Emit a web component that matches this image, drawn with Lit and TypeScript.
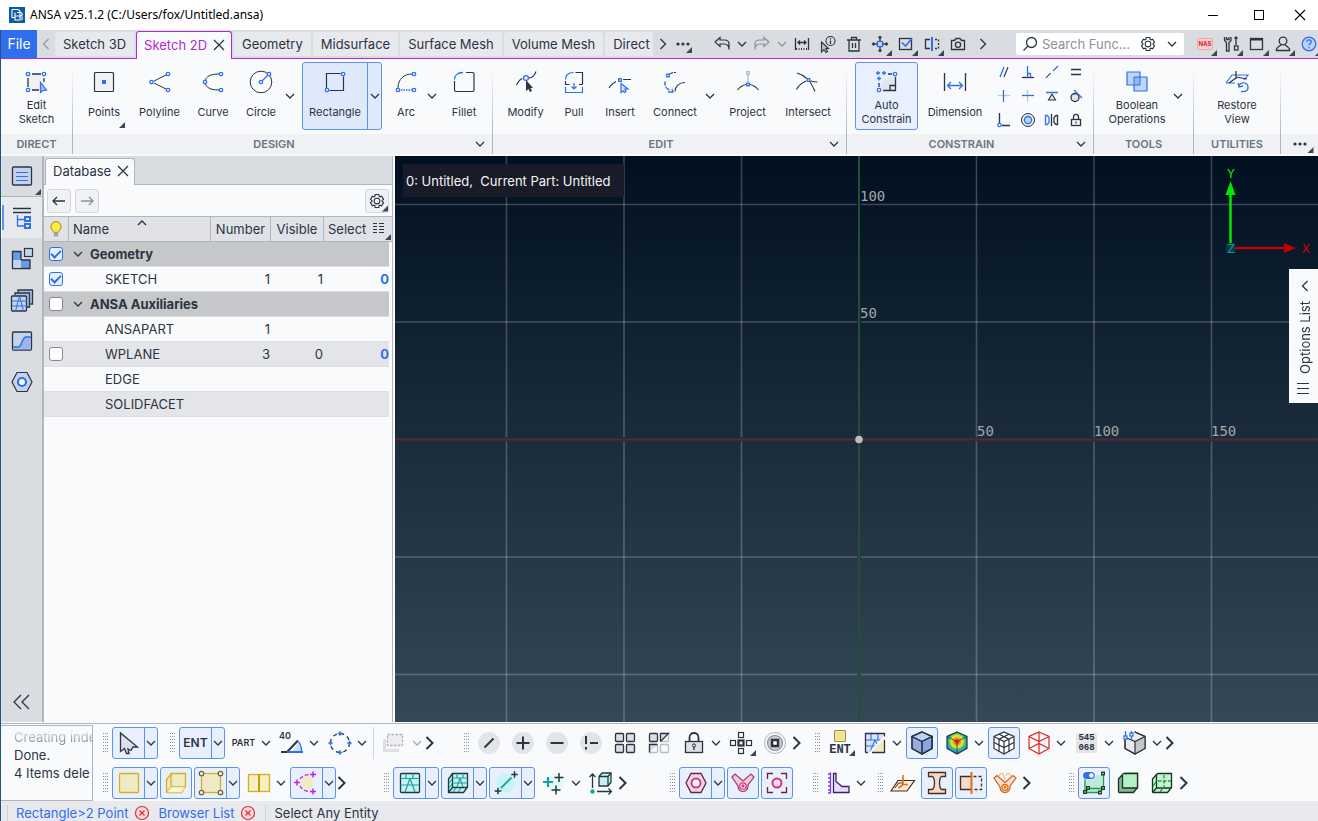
import { LitElement, html, css, svg, nothing } from 'lit';
import { customElement, state } from 'lit/decorators.js';
import { classMap } from 'lit/directives/class-map.js';

const D = '#2b3442';
const B = '#2f6fed';
const G = '#8a9099';

const node = (x: number, y: number) =>
  svg`<circle cx=${x} cy=${y} r="1.7" fill="#fff" stroke=${B} stroke-width="1.3"/>`;
const knot = (x: number, y: number, c = B) =>
  svg`<rect x=${x - 1.3} y=${y - 1.3} width="2.6" height="2.6" fill="#fff" stroke=${c} stroke-width="1.3"/>`;
const plus = (x: number, y: number, r: number, c: string, w = 1.5) =>
  svg`<path d=${`M${x - r} ${y}h${2 * r}M${x} ${y - r}v${2 * r}`} stroke=${c} stroke-width=${w}/>`;

const polar = (deg: number, r: number) => {
  const a = (deg * Math.PI) / 180;
  return `${(12 + r * Math.cos(a)).toFixed(2)} ${(12 + r * Math.sin(a)).toFixed(2)}`;
};
const GEAR = 'M' + [0, 1, 2, 3, 4, 5]
  .flatMap(k => [polar(k * 60 - 106, 9), polar(k * 60 - 74, 9), polar(k * 60 - 66, 6.8), polar(k * 60 - 54, 6.8)])
  .join('L') + 'z';
const HEX3D = 'M12 1L22 5.5V17.5L12 23 2 17.5V5.5z';

/* Every glyph is drawn on a 24 x 24 grid. */
const icons: Record<string, unknown> = {
  down: svg`<path d="M8 10l4 4 4-4"/>`,
  up: svg`<path d="M8 14l4-4 4 4"/>`,
  left: svg`<path d="M14.500 7l-5 5 5 5"/>`,
  right: svg`<path d="M9.500 7l5 5-5 5"/>`,
  more: svg`<path d="M8.500 6l6 6-6 6" stroke-width="2"/>`,
  dleft: svg`<path d="M11 5l-7 7 7 7M19 5l-7 7 7 7"/>`,
  close: svg`<path d="M7 7l10 10M17 7L7 17"/>`,
  dots: svg`<g fill=${D} stroke="none"><circle cx="7" cy="12" r="1.600"/><circle cx="12" cy="12" r="1.600"/><circle cx="17" cy="12" r="1.600"/></g>`,
  wmin: svg`<path d="M7 12.500h10" stroke="#000" stroke-width="1"/>`,
  wmax: svg`<rect x="7.500" y="7.500" width="9" height="9" stroke="#000" stroke-width="1"/>`,
  wclose: svg`<path d="M7 7l10 10M17 7L7 17" stroke="#000" stroke-width="1.100"/>`,
  undo: svg`<path d="M10 5.500L5 10l5 4.500V12h4c3 0 5 2 5 5.500V12c0-2.500-2-4-4.500-4H10z" stroke-width="1.200"/>`,
  redo: svg`<path d="M14 5.500L19 10l-5 4.500V12h-4c-3 0-5 2-5 5.500V12c0-2.500 2-4 4.500-4H14z" stroke=${G} stroke-width="1.200"/>`,
  measure: svg`<path d="M5.500 6v12M18.500 6v12M8 10.500h8M10 8.500l-2 2 2 2M14 8.500l2 2-2 2"/><path d="M6 17h12" stroke-width="2" stroke-dasharray="1 1.500"/>`,
  cursorinfo: svg`<circle cx="14.500" cy="9" r="4.500" stroke-width="1.100"/><path d="M14.500 8.500V12M14.500 6.300v1.200"/><path d="M5.500 10v10l2.500-2.500 2 3 1.500-1-1.500-3h2.500z" fill="#b9bec7" stroke-width="1.100"/>`,
  trash: svg`<path d="M5 8h14M7 8v11h10V8M9.500 8V5.500h5V8M10.500 11v5M13.500 11v5"/>`,
  move: svg`<rect x="9.500" y="9.500" width="5" height="5" stroke=${B}/><path d="M12 9V4.500M12 15v4.500M9 12H4.500M15 12h4.500M10.500 6L12 4.500 13.500 6M10.500 18l1.500 1.500 1.500-1.500M6 10.500L4.500 12 6 13.500M18 10.500l1.500 1.500-1.500 1.500"/>`,
  check: svg`<rect x="5.500" y="6.500" width="12" height="11"/><path d="M8 10.500l3.500 3.500L18 6.500" stroke=${B} stroke-width="1.600"/>`,
  mirror: svg`<path d="M10 7.500H5.500v9H10"/><path d="M15 7.500h3.500v9H15" stroke-dasharray="2 1.500"/><path d="M12 5v14" stroke=${B} stroke-width="2"/>`,
  camera: svg`<path d="M5.500 8.500h3l1.500-2h4l1.500 2h3v9h-13z"/><circle cx="12" cy="12.800" r="2.600"/>`,
  search: svg`<circle cx="13.500" cy="10.500" r="5"/><path d="M10 14l-4.500 4.500"/>`,
  gear: svg`<path d=${GEAR} stroke-width="1.500"/><circle cx="12" cy="12" r="3.800" stroke-width="1.400"/>`,
  tools: svg`<path d="M5.500 5v3.500l2 2V19H10v-8.500l2-2V5M7.500 5v2.500H10V5"/><path d="M17 5v8M15.500 6.500L17 5l1.500 1.500"/><rect x="15.500" y="14" width="3.500" height="4"/>`,
  win: svg`<rect x="5.500" y="6.500" width="12" height="11"/><path d="M5.500 7.500h12" stroke-width="2"/>`,
  user: svg`<circle cx="12" cy="9" r="3.800"/><path d="M5 18.500c1-3.500 3-4.500 5-5.500M19 18.500c-1-3.500-3-4.500-5-5.500M5 18.500h14"/>`,
  help: svg`<circle cx="12" cy="12" r="6.800" fill="#bcd2fa" stroke=${B}/><path d="M9.800 10c0-3 4.500-2.600 4.500 0 0 1.600-2.300 1.600-2.300 3.200M12 14.800v1.400" stroke=${B}/>`,
  list: svg`<rect x="2.500" y="3" width="19" height="18" rx="1" fill="#c3d3ea"/><path d="M6 8.500h12M6 12.500h12M6 16.500h12" stroke=${B} stroke-width="1.200"/>`,
  tree: svg`<path d="M3 2.500h18M3 6.500h18"/><path d="M7.500 9v11H14M7.500 13.500H14" stroke=${B}/><rect x="15" y="11" width="5" height="4" stroke=${B} stroke-width="2"/><rect x="15" y="18" width="5" height="4" stroke=${B} stroke-width="2"/>`,
  parts: svg`<rect x="14.500" y="1.500" width="8" height="8" fill="#c3d3ea" stroke-width="1.200"/><path d="M2.500 4.500H11V13h9v8.500H2.500z" fill="#6b98e8"/><path d="M3.200 13H11v8H3.200z" fill="#c3d3ea" stroke="none"/>`,
  stack: svg`<path d="M8 4.500V2h14.500V16h-2M5 7.500V5h14.500v14H17" fill="#a8bfea"/><rect x="1.500" y="8" width="15" height="15" rx="1" fill="#c3d3ea"/><path d="M2 13h15M2 18h15M9.500 8l-4 15M9.500 8l4 15" stroke=${B} stroke-width="1"/>`,
  curvebox: svg`<rect x="2.500" y="3" width="19" height="18" rx="1" fill="#c3d3ea"/><path d="M3 18h5c4 0 4-10 8-10h5v12.500H3z" fill="#9cb5ea" stroke="none"/><path d="M3 18h5c4 0 4-10 8-10h5" stroke=${B} stroke-width="1.600"/>`,
  hexa: svg`<path d="M7 2.500h10l5 9.500-5 9.500H7L2 12z" fill="#c3d3ea" stroke-width="1.200"/><circle cx="12" cy="12" r="4" fill="#fff" stroke=${B} stroke-width="2.200"/>`,
  bulb: svg`<path d="M9.500 15.500c-.500-2-3-3-3-6a5.500 5.500 0 0 1 11 0c0 3-2.500 4-3 6z" fill="#f8ec4a" stroke="#b59b12" stroke-width="1.200"/><path d="M10.500 17h3v2.500h-3z" stroke="#777" stroke-width="1"/>`,
  back: svg`<path d="M6 12h12M10 8l-4 4 4 4"/>`,
  fwd: svg`<path d="M6 12h12M14 8l4 4-4 4" stroke=${G}/>`,
  cols: svg`<path d="M7 6.500h4M7 9.500h4M7 12.500h4M7 15.500h4M13 6.500h5M13 9.500h5M13 12.500h5M13 15.500h5" stroke-width="1.100"/>`,
  burger: svg`<path d="M4 6.500h12M4 11.500h12M4 16.500h12" stroke-width="1.100"/>`,
  stop: svg`<circle cx="12" cy="12" r="6.500" fill="#fbdcdc" stroke="#dc2f3a" stroke-width="1.200"/><path d="M9.500 9.500l5 5M14.500 9.500l-5 5" stroke="#dc2f3a" stroke-width="1.300"/>`,

  edit: svg`<rect x="4" y="4" width="16" height="16" fill="#f0f1f4" stroke="none"/><path d="M8 4h9M4 8v9M8 20h7M20 8v4"/>${node(4, 4)}${node(20, 4)}${node(4, 20)}<path d="M16.500 12.500v10l2.500-2 3.500-.500z" fill="#9bbcf5" stroke=${B} stroke-width="1.200"/>`,
  points: svg`<rect x="2.500" y="2.500" width="19" height="19" rx="1" fill="#f0f1f4" stroke-width="1.200"/><rect x="10" y="10" width="4" height="4" fill=${B} stroke="none"/>`,
  polyline: svg`<path d="M6 11l12-6M6 13l12 6" stroke-width="1"/>${node(3.5, 12)}${node(20, 4)}${node(20, 20)}`,
  curve: svg`<path d="M18 4C9 4 5 7 4.500 10M18 20c-9 0-13-3-13.500-6" stroke-width="1"/>${node(4, 12)}${node(20, 4)}${node(20, 20)}`,
  circle: svg`<circle cx="12" cy="12" r="10.800" stroke-width="1"/><path d="M13.500 10.500l5-5" stroke=${B}/>${node(20, 4)}${node(12, 12)}`,
  rectangle: svg`<path d="M17.500 3.500h-14V18M6.500 20.500h14V6.500" stroke-width="1.200"/>${node(20, 4)}${node(4, 20)}`,
  arc: svg`<path d="M18 4C10 4 4 9 4 18" stroke-width="1"/><path d="M7 20h11" stroke=${B} stroke-dasharray="1.500 1"/>${node(20, 4)}${node(4, 20)}${node(20, 20)}`,
  fillet: svg`<path d="M2.500 11v9c0 1 .500 1.500 1.500 1.500h16.500c1 0 1.500-.500 1.500-1.500V4c0-1-.500-1.500-1.500-1.500H14" stroke-width="1.200"/><path d="M2.500 9.500C2.500 6 5 2.500 11 2.500" stroke=${B}/>`,
  modify: svg`<path d="M2.500 15c2-4 4-6 6-6.500M15 8c3 0 6-3 7-6.500" stroke-width="1.100"/><circle cx="12" cy="8" r="2.400" stroke=${B}/><path d="M12 10v11l2.500-2 1.500 3 2-1-1.500-3H19z" fill=${D} stroke="none"/>`,
  pull: svg`<path d="M3.500 11v3.500h4M20.500 14.500v-12h-7M17 14.500h3.500" stroke-width="1.200"/><path d="M3.500 9.500c0-4 2.500-7 8-7M3.500 17v5.500h17V17M12 13v6M9.500 16.500L12 19l2.500-2.500" stroke=${B} stroke-width="1.200"/>`,
  insert: svg`<path d="M1 18c2-3 4-5 7-6.500M15 9.500h8" stroke-width="1.100"/>${knot(12, 10)}<path d="M13 13.500v9l2-1.500 1.500 1.500 1.500-1-1-2.500h3z" fill="#cfe0fb" stroke=${B} stroke-width="1.200"/>`,
  connect: svg`<path d="M11 2.500h2M4.500 6.500C6 4 8 3 10 2.500M2 11.500v4M12 21.500c0-5 4-9 10-9" stroke-width="1.100"/>${knot(5, 5.5)}<path d="M2.500 16.500c1 2 2 3 4 3.500M5 22h5l-1-3" stroke=${B}/>`,
  project: svg`<path d="M12 5v8" stroke="#b5bac3"/>${knot(12, 3, '#b5bac3')}<path d="M1.500 20C4 17 7 15 10 14.500M14 14.500c3 .500 6 2.500 8.500 5.500" stroke-width="1.100"/>${knot(12, 14.5)}`,
  intersect: svg`<path d="M1 3c4 1 7 3 9.500 5.500M14 11c3 .500 5 .800 7.500 1M14 12c2 3 3.500 6 5 9.500M.500 19.500c2-4 6-7 9.500-8.500" stroke-width="1.100"/>${knot(12.5, 10)}`,
  auto: svg`<path d="M10 10L20 4v16H4z" fill="#d8dde6" opacity=".5" stroke="none"/>${plus(3, 3, 2, B, 1.3)}${plus(9, 3, 2, B, 1.3)}${plus(4, 8.5, 2, B, 1.3)}<path d="M13 4h4M4 13v4M8 20.500h12.500V7M15 20v-4.500h5"/>${node(20, 4)}${node(4, 20)}`,
  dimension: svg`<path d="M1.500 3v18M22.500 3v18"/><path d="M4.500 15.500h15M8 12l-3.500 3.500L8 19M16 12l3.500 3.500L16 19" stroke=${B}/>`,
  boolean: svg`<path d="M2 2h13v5h7v14H9v-6H2z" fill="#bdd5fa" stroke=${B} stroke-width="1.200"/><path d="M9 7h6v8H9z" fill="#93b8f6" stroke=${B} stroke-width="1"/>`,
  restore: svg`<path d="M1 13L7 5h16l-4 5M1 13h9" stroke=${B} stroke-width="1.200"/><path d="M11 1v8M11 7l11 2M11 8l-7 5" stroke-width="1.200"/><path d="M14 16.500c0-5 9-5 9 1 0 4-4 4.500-7 4M13 13l1 4 4-1" stroke=${B}/>`,

  parallel: svg`<path d="M8 17l4-10" stroke=${B}/><path d="M12 17l4-10" stroke-width="1.100"/>`,
  perp: svg`<path d="M6 17.500h12"/><path d="M11.500 6v11.500M11.500 13.500h3v4" stroke=${B}/>`,
  colinear: svg`<path d="M6 18l4.500-5" stroke-width="1.100"/><path d="M13 11l5-5" stroke=${B}/>`,
  equal: svg`<path d="M7 9.500h10M7 14.500h10"/>`,
  vert: svg`<path d="M6 11.500h12" stroke="#c4c8cf"/><path d="M11.500 6v12" stroke=${B}/>`,
  horiz: svg`<path d="M11.500 6v12" stroke="#c4c8cf"/><path d="M6 11.500h12" stroke=${B}/>`,
  mid: svg`<path d="M6 8.500h12" stroke=${B} stroke-width="1.500"/><path d="M12 10l-3.500 6h7z" fill="#e3e5e9" stroke-width="1.100"/>`,
  tangent: svg`<circle cx="11" cy="13.500" r="4" fill="#e3e5e9"/><path d="M10 6l8 8" stroke=${B}/>`,
  coinc: svg`<path d="M7.500 5v10M10 17.500h8"/>${node(7.5, 17)}`,
  conc: svg`<circle cx="12" cy="12" r="6.500" stroke=${D} fill="#e3e5e9" stroke-width="1"/><circle cx="12" cy="12" r="3.500" fill="#bdd5fa" stroke=${B}/>`,
  sym: svg`<path d="M11.500 6v12"/><path d="M5.500 7.500h1.500l2 2v5l-2 2H5.500z" stroke=${B}/><path d="M17.500 7.500h-1.500l-2 2v5l2 2h1.500z"/>`,
  lock: svg`<rect x="7.500" y="11.500" width="9" height="6"/><path d="M9.500 11V9c0-3.500 5-3.500 5 0v2M12 13.500v2"/>`,

  pick: svg`<path d="M3.500 2v18.500l4-3 2 5h2.500l-1-4.500 3 1.500 2-3.500h4.500z" fill="#dcdfe5" stroke-width="1.300"/>`,
  angle: svg`<path d="M12 21l6-9c3 2 4 5 4 9z" fill="#cfe0fb" stroke="none"/><path d="M18.500 11c2 2 3 5 3 9" stroke=${B}/><path d="M1 21h6L18 9.500" stroke-width="2"/><path d="M7 21h16" stroke=${B} stroke-width="2"/>`,
  area: svg`<circle cx="12" cy="12" r="9.500" stroke-dasharray="4 3.460"/>${plus(12, 2.5, 2.2, B)}${plus(12, 21.5, 2.2, B)}${plus(2.5, 12, 2.2, B)}${plus(21.5, 12, 2.2, B)}`,
  isolate: svg`<path d="M0 8h3v10h13v3H0z" fill="#b5b8bd" stroke="none"/><rect x="4.500" y="3.500" width="15" height="11" fill="#dcdcde" stroke="#444" stroke-dasharray="2.500 1.500"/>`,
  slash: svg`<circle cx="12" cy="12" r="11" fill="#e3e4e8" stroke="none"/><path d="M7.500 16.500l9-9" stroke-width="2"/>`,
  add: svg`<circle cx="12" cy="12" r="11" fill="#e3e4e8" stroke="none"/>${plus(12, 12, 6.5, D, 2)}`,
  minus: svg`<circle cx="12" cy="12" r="11" fill="#e3e4e8" stroke="none"/><path d="M5.500 12h13" stroke-width="2"/>`,
  excl: svg`<circle cx="12" cy="12" r="11" fill="#e3e4e8" stroke="none"/><path d="M7 5v8M7 16v2.500M11 12h8" stroke-width="2"/>`,
  four: svg`<g fill="#dcdee2"><rect x="2.500" y="2.500" width="8" height="8" rx="1"/><rect x="13.500" y="2.500" width="8" height="8" rx="1"/><rect x="2.500" y="13.500" width="8" height="8" rx="1"/><rect x="13.500" y="13.500" width="8" height="8" rx="1"/></g>`,
  fourinv: svg`<rect x="2.500" y="2.500" width="8" height="8" rx="1" fill="#dcdee2"/><g stroke="#b9bdc4"><rect x="13.500" y="2.500" width="8" height="8" rx="1"/><rect x="2.500" y="13.500" width="8" height="8" rx="1"/><rect x="13.500" y="13.500" width="8" height="8" rx="1"/></g><path d="M13.500 10.500v-8h8l-8 8M2.500 21.500v-8h8" fill="#dcdee2"/>`,
  biglock: svg`<path d="M7.500 10V6.500c0-6 9-6 9 0V10" stroke-width="1.800"/><rect x="3.500" y="10.500" width="17" height="11" fill="#dfe1e5"/><circle cx="12" cy="14.500" r="1.600" stroke-width="1"/><path d="M12 16v3"/>`,
  neigh: svg`<rect x="9.500" y="9.500" width="5" height="5" stroke-width="2.200"/><g stroke-width="1.200"><rect x="9.500" y="1.500" width="5" height="5"/><rect x="9.500" y="17.500" width="5" height="5"/><rect x="1.500" y="9.500" width="5" height="5"/><rect x="17.500" y="9.500" width="5" height="5"/></g>`,
  target: svg`<circle cx="12" cy="12" r="10.500" stroke="#b0b4bb" stroke-width="1"/><circle cx="12" cy="12" r="7.500" fill="#c9ccd1" stroke=${G} stroke-width="1.200"/><rect x="9" y="9" width="6" height="6" fill="#fff" stroke-width="2.500"/>`,
  meshes: svg`<rect x="2" y="2.500" width="20" height="19" fill="#d7e5fb" stroke="none"/><path d="M2 9h20M2 15h20M8 2.500v6.500M15 2.500v6.500M12 9L7 21M12 9l4 8" stroke=${B} stroke-width="1.100"/><path d="M22 5v16.500H7z" fill="#f1eac0" stroke="#fff" stroke-width="1.500"/><path d="M2.500 21.500v-19h19v3M2.500 21.500h2.500M21.500 9v12.500H9"/>`,
  shaded: svg`<path d=${HEX3D} fill="#9aabe0"/><path d="M12 1l10 4.500-10 5L2 5.500z" fill="#b8d4fb"/><path d="M12 10.500l10-5v12L12 23z" fill="#86a6e6"/><path d=${HEX3D} stroke-width="1.200"/><path d="M2 5.500l10 5 10-5M12 10.500V23" stroke-width="1"/>`,
  contour: svg`<defs><radialGradient id="heat" gradientUnits="userSpaceOnUse" cx="12" cy="10.500" r="12"><stop offset=".1" stop-color="#e23a1c"/><stop offset=".35" stop-color="#f2b92c"/><stop offset=".5" stop-color="#e8ea2c"/><stop offset=".66" stop-color="#35c45e"/><stop offset=".8" stop-color="#2aa8d8"/><stop offset="1" stop-color="#2350c9"/></radialGradient></defs><path d=${HEX3D} fill="url(#heat)" stroke-width="1.200"/><path d="M2 5.500l10 5 10-5M12 10.500V23" stroke-width=".8"/>`,
  wirecube: svg`<path d=${HEX3D} fill="#fff" stroke-width="1.200"/><path d="M2 5.500l10 5 10-5M12 10.500V23M2 11.500l10 5 10-5M7 3.200l10 5v12M17 3.200l-10 5v12" stroke-width="1.200"/>`,
  redcube: svg`<g stroke="#e02424" stroke-width="1.200"><path d=${HEX3D}/><path d="M2 5.500l10 5 10-5M12 10.500V23M12 1v11.500M2 17.500l10-5 10 5"/></g>`,
  cubeset: svg`<path d=${HEX3D} fill="#e9eaec" stroke-width="1.200"/><path d="M12 10.500l10-5v12L12 23z" fill="#c5c7cb" stroke="none"/><path d=${HEX3D} stroke-width="1.200"/><path d="M-1-1h12.500v9.500H-1z" fill="#f9fafc" stroke="none"/><path d="M4 7l8 3.500 10-5M12 10.500V23" stroke-width="1.200"/><path d="M2.500 0v9.500M8.500 0v8" stroke=${B}/><g fill="#fff" stroke=${B}><rect x="1" y="5" width="3" height="3"/><rect x="7" y="2" width="3" height="3"/></g>`,

  yface: svg`<rect x="2.500" y="2.500" width="19" height="19" rx="1" fill="#efe9c6" stroke="#d4b11e"/>`,
  yvol: svg`<path d="M2.500 8.500l5-6h14v13l-4 6h-15z" fill="#efe9c6" stroke="#d4b11e"/><path d="M7 2.500V16h14M7 16l-4 5" stroke="#d4b11e"/><path d="M7 16h14.500l-4 5.500H2.500z" fill="#fff" opacity=".6" stroke="none"/>`,
  ynodes: svg`<rect x="2.500" y="2.500" width="19" height="19" fill="#efe9c6" stroke="#d4b11e"/><g fill="#fff" stroke="#6b6440"><circle cx="2.500" cy="2.500" r="2.200"/><circle cx="21.500" cy="2.500" r="2.200"/><circle cx="2.500" cy="21.500" r="2.200"/><circle cx="21.500" cy="21.500" r="2.200"/></g>`,
  ysplit: svg`<rect x="1.500" y="3.500" width="21" height="17" fill="#f5efc3" stroke="#d4b11e"/><path d="M12 3.500v17" stroke="#c39d10" stroke-width="2"/>`,
  ypts: svg`<path d="M7 6c5-3 10-2 11 5 0 4-1 7-5 8-4-1-7-5-8-8z" fill="#efe9c6" stroke="none"/><path d="M5 8c2-3 6-4.500 11-4.500M5 15c2 4 6 5.500 11 5.500" stroke="#c026d3" stroke-dasharray="4 2"/>${plus(18, 3.5, 3, '#c026d3')}${plus(2, 11.5, 3, '#c026d3')}${plus(18, 20.5, 3, '#c026d3')}`,
  tmesh: svg`<rect x="2.500" y="2.500" width="19" height="19" rx="1" fill="#c8f2f2" stroke="#1b3a3f"/><path d="M2.500 7.500h19M2.500 14h19M8 7.500v-5M15 7.500v-5M12 7.500L7 21M12 7.500L17 21" stroke="#17a2a2" stroke-width="1.200"/>`,
  tvol: svg`<path d="M2.500 8l4-5.500h15V16l-4 5.500h-15z" fill="#c8f2f2" stroke="#1b3a3f"/><path d="M6.500 2.500v14h15M6.500 16.500l-4 5" stroke="#1b3a3f"/><path d="M6.500 7h15M6.500 12h15M11 2.500v4.500M17 2.500v4.500M14 7l-3 9M14 7l3 9M3 12l3-4M3 17l3-4M7 21l3-4M12 21l3-4" stroke="#17a2a2" stroke-width="1.100"/>`,
  tline: svg`<circle cx="12" cy="12" r="9.500" fill="#c8f4f4" stroke="none"/><path d="M7 17L17.500 6.500" stroke="#17a2a2" stroke-width="1.800"/>${plus(20.5, 3.5, 3.3, '#1b3a3f')}${plus(4, 20, 3.3, '#1b3a3f')}`,
  tplus: svg`<circle cx="13" cy="12" r="9.500" fill="#e3f9f8" stroke="none"/>${plus(6, 11, 5, '#17a2a2', 2.2)}${plus(17, 6.5, 4.5, '#1b3a3f')}${plus(14, 19, 4.5, '#1b3a3f')}`,
  textr: svg`<path d="M3.500 17V3M.500 6l3-3 3 3M8 20.500h14M19.500 17.500l3 3-3 3" stroke="#1b3a3f"/><circle cx="3.500" cy="20.500" r="2.200" fill="#17a2a2" stroke="none"/><path d="M10 5.500l3-3.500h9v9l-3 4h-9z" fill="#c8f2f2" stroke="#1b3a3f"/><path d="M10 5.500h9v9M19 5.500l3-3.500" stroke="#1b3a3f"/>`,
  phex: svg`<path d="M7 2.500h10l5 9.500-5 9.500H7L2 12z" fill="#eadbe8" stroke="#6b2140"/><circle cx="12" cy="12" r="4.500" fill="#fff" stroke="#e0307e" stroke-width="2"/>`,
  pplug: svg`<path d="M1 6l3-3 8 7 8-7 3 3-6 8c1 8-10 9-10 1z" fill="#f3c9de" stroke="#a33a6c" stroke-width="1.200"/><circle cx="12" cy="15" r="3.200" fill="#fff" stroke="#e0307e"/><circle cx="12" cy="15" r="1" stroke="#e0307e"/>`,
  pfocus: svg`<path d="M2.500 8V2.500H8M16 2.500h5.500V8M21.500 16v5.500H16M8 21.500H2.500V16" stroke="#6b2140"/><circle cx="12" cy="12" r="4.500" fill="#fbe3ef" stroke="#e0307e" stroke-width="2"/>`,
  vprofile: svg`<path d="M6.500 2.500H9v8l6 5h7v6H6.500z" fill="#e9dcfb" stroke="#3d1f6b"/><path d="M3.500 1.500v21M1 3h2M1 7h2M1 11h2M1 15h2M1 19h2M1 22h2" stroke="#7c3aed"/>`,
  oplane: svg`<path d="M0 20L7 9.500h16.500L16 20z" fill="#fbeadd" stroke="#4a2c1a" stroke-width="1.200"/><path d="M4 17l3.500-5h5" stroke="#4a2c1a" stroke-width="1"/><path d="M12 4v9.500h5M12 13.500L7.500 17" stroke="#ea6c0a" stroke-width="1.600"/>`,
  obeam: svg`<path d="M3.500 1.500h17v4h-4c-2 1.500-2 3-2 6.500s0 5 2 6.500h4v4h-17v-4h4c2-1.500 2-3 2-6.500s0-5-2-6.500h-4z" fill="#f1dccf" stroke="#4a2c1a"/>`,
  osym: svg`<path d="M12 5.500H1.500v13H12" fill="#f1dccf" stroke="#4a2c1a"/><path d="M14.500 5.500h8v13h-8" stroke="#4a2c1a" stroke-dasharray="3 2"/><path d="M12.500 1v22" stroke="#ea6c0a" stroke-width="2"/>`,
  oplug: svg`<path d="M6 5c1-3 4-4 5 0l1 4M18 5c-1-3-4-4-5 0" stroke="#f3b98b" stroke-width="1.200"/><path d="M1 7l3-2.500 8 7 8-7L23 7l-6 8c1 8-10 9-10 1z" fill="#fbe0cc" stroke="#c2672a" stroke-width="1.200"/><circle cx="12" cy="16.500" r="3" fill="#fff" stroke="#ea6c0a"/><circle cx="12" cy="16.500" r=".8" stroke="#ea6c0a"/>`,
  gmorph: svg`<path d="M3 7l4-3h14.500v13l-4 4.500H3z" fill="#c1e8dc" stroke="none"/><path d="M3 21V6M3 21.500h15l3.500-4.500V3M6 17.500h15M3 21.500l3.500-4" stroke="#16a34a"/>${knot(21, 2.5, '#14351f')}${knot(3, 21, '#14351f')}${knot(6, 17, '#14351f')}${knot(21, 17, '#14351f')}${knot(18, 21.5, '#14351f')}<rect x="0" y="-.500" width="14" height="9" rx="4.500" fill="#fff" stroke="none"/><rect x="1" y="1" width="12" height="7" rx="3.500" fill=${B} stroke="none"/><circle cx="9.500" cy="4.500" r="2.300" fill="#fff" stroke="none"/>`,
  gsolid: svg`<path d="M2.500 8l4-4.500c1-1 1.500-1 2-1h13v14l-4 5h-14c-.7 0-1-.5-1-1z" fill="#8db39a" stroke="#14351f"/><path d="M6.500 3.500l15-1V17H6.500z" fill="#b5f0c4" stroke="none"/><path d="M8.500 2.500h13V17H6.500V4" stroke="#14351f"/>`,
  ggrid: svg`<path d="M2.500 8l4-4.500c1-1 1.500-1 2-1h13v14l-4 5h-14c-.7 0-1-.5-1-1z" fill="#c9f0d2" stroke="#14351f"/><path d="M6.500 3v14h15M6.500 17l-4 4.500" stroke="#14351f"/><path d="M14 4v12M8 10h13" stroke="#16a34a" stroke-dasharray="3.500 1.500"/><path d="M10 21l3-4M3 15l3-4" stroke="#16a34a"/>`,
};

const ic = (name: string, size = 24) => html`<svg class="ic" width=${size} height=${size} viewBox="0 0 24 24" aria-hidden="true">${icons[name]}</svg>`;

type Tool = { i?: string; t: string; on?: boolean; drop?: boolean; text?: string; cls?: string; corner?: boolean; dim?: boolean };

const tabs = ['Geometry', 'Midsurface', 'Surface Mesh', 'Volume Mesh', 'Direct'];

const quick: [string, string, boolean][] = [
  ['measure', 'Measure', false], ['cursorinfo', 'Entity info', false], ['trash', 'Delete', false],
  ['move', 'Transform', true], ['check', 'Checks', true], ['mirror', 'Symmetry', true], ['camera', 'Snapshot', false],
];

const design: Tool[] = [
  { i: 'points', t: 'Points', corner: true }, { i: 'polyline', t: 'Polyline' }, { i: 'curve', t: 'Curve' },
  { i: 'circle', t: 'Circle', drop: true }, { i: 'rectangle', t: 'Rectangle', on: true, drop: true },
  { i: 'arc', t: 'Arc', drop: true }, { i: 'fillet', t: 'Fillet' },
];
const edit: Tool[] = [
  { i: 'modify', t: 'Modify' }, { i: 'pull', t: 'Pull' }, { i: 'insert', t: 'Insert' },
  { i: 'connect', t: 'Connect', drop: true }, { i: 'project', t: 'Project' }, { i: 'intersect', t: 'Intersect' },
];
const constraints = ['parallel', 'perp', 'colinear', 'equal', 'vert', 'horiz', 'mid', 'tangent', 'coinc', 'conc', 'sym', 'lock'];

const rowA: (Tool | 'sep' | 'more')[][] = [
  [{ i: 'pick', t: 'Pick', on: true, drop: true }],
  [{ t: 'Entities', text: 'ENT', cls: 'ent', on: true, drop: true }, { t: 'Part', text: 'PART', cls: 'part', drop: true },
   { i: 'angle', t: 'Feature angle', text: '40', cls: 'deg', drop: true }, { i: 'area', t: 'Area selection', drop: true }, 'sep',
   { i: 'isolate', t: 'Isolate', drop: true, dim: true }, 'more'],
  [{ i: 'slash', t: 'Not' }, { i: 'add', t: 'Add' }, { i: 'minus', t: 'Remove' }, { i: 'excl', t: 'Only' }, { i: 'four', t: 'All' },
   { i: 'fourinv', t: 'Invert' }, { i: 'biglock', t: 'Lock', drop: true }, { i: 'neigh', t: 'Neighbours', corner: true },
   { i: 'target', t: 'Focus' }, 'more'],
  [{ t: 'Entity colour', text: 'ENT', cls: 'entbox', corner: true }, { i: 'meshes', t: 'Mesh view', drop: true },
   { i: 'shaded', t: 'Shaded', on: true }, { i: 'contour', t: 'Contour', drop: true }, { i: 'wirecube', t: 'Wire', on: true },
   { i: 'redcube', t: 'Bounds', drop: true }, { t: 'Numbers', text: '545\n068', cls: 'nums', drop: true },
   { i: 'cubeset', t: 'View settings', drop: true }, 'more'],
];
const rowB: (Tool | 'sep' | 'more')[][] = [
  [{ i: 'yface', t: 'Faces', on: true, drop: true }, { i: 'yvol', t: 'Volumes', on: true }, { i: 'ynodes', t: 'Hot points', on: true, drop: true },
   { i: 'ysplit', t: 'Split', drop: true }, { i: 'ypts', t: 'Curves', on: true, drop: true }, 'more'],
  [{ i: 'tmesh', t: 'Shells', on: true, drop: true }, { i: 'tvol', t: 'Solids', on: true, drop: true }, { i: 'tline', t: 'Lines', on: true, drop: true },
   { i: 'tplus', t: 'Grids', drop: true }, { i: 'textr', t: 'Coordinates' }, 'more'],
  [{ i: 'phex', t: 'Bolts', on: true, drop: true }, { i: 'pplug', t: 'Connectors', on: true }, { i: 'pfocus', t: 'Connections', on: true }],
  [{ i: 'vprofile', t: 'Cross sections', drop: true }],
  [{ i: 'oplane', t: 'Work planes' }, { i: 'obeam', t: 'Beams', on: true }, { i: 'osym', t: 'Symmetry plane', on: true }, { i: 'oplug', t: 'Entities' }, 'more'],
  [{ i: 'gmorph', t: 'Morph boxes', on: true }, { i: 'gsolid', t: 'Solid boxes' }, { i: 'ggrid', t: 'Box grid' }, 'more'],
];

type Row = { name: string; group?: boolean; check?: boolean; num?: string; vis?: string; sel?: string };
const rows: Row[] = [
  { name: 'Geometry', group: true, check: true },
  { name: 'SKETCH', check: true, num: '1', vis: '1', sel: '0' },
  { name: 'ANSA Auxiliaries', group: true, check: false },
  { name: 'ANSAPART', num: '1' },
  { name: 'WPLANE', check: false, num: '3', vis: '0', sel: '0' },
  { name: 'EDGE' },
  { name: 'SOLIDFACET' },
];

@customElement('app-root')
export class AppRoot extends LitElement {
  @state() private side = 1;

  static styles = css`
    :host { display: flex; flex-direction: column; height: 100vh; overflow: hidden; background: #f9fafc; color: #2b3442; font: 13px/18px Inter, "Liberation Sans", sans-serif; }
    * { box-sizing: border-box; }
    button, input { font: inherit; color: inherit; margin: 0; padding: 0; border: 0; background: none; border-radius: 0; }
    button { display: flex; align-items: center; justify-content: center; flex: none; position: relative; }
    .ic { display: block; flex: none; fill: none; stroke: #2b3442; stroke-width: 1.3; overflow: visible; }
    .corner::after { content: ""; position: absolute; right: 1px; bottom: 1px; width: 6px; height: 6px; background: #3c4656; clip-path: polygon(100% 0, 100% 100%, 0 100%); }
    .dim { opacity: .4; }

    .title { flex: none; height: 30px; display: flex; align-items: center; background: #fff; color: #000; font: 12px/16px "Noto Sans", sans-serif; padding-left: 9px; }
    .title h1 { flex: 1; margin: 0; font: inherit; }
    .title button { width: 46px; height: 30px; }
    .title button:last-child { width: 36px; }
    .logo { width: 16px; height: 16px; display: block; margin-right: 5px; }

    .frame { flex: 1; min-height: 0; display: flex; flex-direction: column; border-left: 1px solid #1d5878; }
    .tabbar { flex: none; height: 29px; display: flex; align-items: center; background: #d9dce1; box-shadow: inset 0 -1px #b32bd0; padding-bottom: 1px; margin-right: -4px; }
    .file { width: 36px; height: 28px; background: #2f6fed; color: #fff; font-size: 14px; align-self: flex-start; }
    .scroll { width: 18px; }
    .tabs { flex: 1; min-width: 0; overflow: hidden; display: flex; gap: 2px; height: 29px; align-items: center; margin-bottom: -1px; padding-bottom: 1px; }
    .tabs button { height: 24px; padding: 0 8px; background: #e8e9ed; border-radius: 3px; white-space: nowrap; }
    .tabs .active { height: 28px; border: 1px solid #b32bd0; border-bottom: 0; border-radius: 3px 3px 0 0; background: #f9fafc; color: #b32bd0; padding: 0 0 1px 7px; align-self: flex-end; margin-bottom: -1px; }
    .q { width: 26px; height: 26px; }
    .q20 { width: 20px; height: 20px; }
    .q14 { width: 14px; height: 20px; }
    .q24 { width: 24px; height: 24px; }
    .undo { margin-left: 16px; }
    .field { display: flex; align-items: center; width: 168px; height: 22px; margin: 0 8px 0 21px; background: #fff; border-radius: 2px; padding: 0 0 0 2px; }
    .field input { flex: 1; min-width: 0; outline: 0; text-overflow: ellipsis; }
    .field input::placeholder { color: #8b919b; opacity: 1; }
    .nas { border: 1px solid #f2a7a7; background: #f7cfcf; color: #cf2b2b; border-radius: 2px; font: 700 6px/10px Inter, sans-serif; padding: 0 1px; }

    .ribbon { flex: none; display: flex; height: 95px; }
    .group { display: flex; flex-direction: column; flex: none; border-right: 1px solid; border-image: linear-gradient(#f9fafc 10%, #b0b5bf 80%) 1; }
    .g1 { width: 72px; } .g2 { width: 420px; } .g3 { width: 354px; } .g4 { width: 247px; } .g5 { width: 100px; } .g6 { width: 87px; }
    .last { flex: 1; border: 0; }
    .cmds { height: 75px; padding: 3px 4px; display: flex; }
    .g1 .cmds, .g6 .cmds { justify-content: center; }
    .g4 .cmds, .g5 .cmds { padding-left: 8px; }
    .foot { flex: 1; display: flex; align-items: center; background: #f0f1f4; color: #6b7482; font: 600 11px/20px Inter, sans-serif; }
    .foot span { flex: 1; text-align: center; }
    .foot button { width: 17px; height: 20px; padding-right: 8px; }
    .last .foot { justify-content: center; }
    .last .foot button { width: 30px; padding: 0; }
    .cmd { height: 68px; display: flex; position: relative; border: 1px solid transparent; border-radius: 3px; }
    .cmd.on { background: #deeafb; border-color: #5b93ee; margin: 0 4px; }
    .cmd.auto { background: #e9f0fd; margin: 0; }
    .cmd.on .drop { border-left: 1px solid #5b93ee; }
    .cmd > button:first-child { flex-direction: column; flex: 1; justify-content: flex-start; padding-top: 7px; }
    .lab { display: flex; align-items: center; justify-content: center; text-align: center; height: 28px; margin-top: 4px; font-size: 11px; line-height: 14px; white-space: pre-line; }
    .drop { width: 14px; }
    .w-points { width: 54px; } .w-polyline { width: 57px; } .w-curve { width: 50px; } .w-circle { width: 60px; } .w-rectangle { width: 80px; }
    .w-arc { width: 54px; } .w-fillet { width: 48px; } .w-modify { width: 57px; } .w-pull { width: 40px; } .w-insert { width: 52px; }
    .w-connect { width: 72px; } .w-project { width: 59px; } .w-intersect { width: 62px; } .w-auto { width: 63px; } .w-dimension { width: 74px; }
    .w-boolean { width: 84px; }
    .w-points.corner::after { right: 5px; }
    .mini { display: grid; grid-template-columns: repeat(4, 24px); grid-auto-rows: 24px; align-content: start; margin-top: -2px; }

    .main { flex: 1; min-height: 0; display: flex; margin-top: 2px; }
    .side { flex: none; width: 43px; background: #d9dce1; border-right: 2px solid #b0b5bf; display: flex; flex-direction: column; }
    .side button { height: 41px; }
    .side button:first-child { border-bottom: 1px solid #b0b5bf; }
    .side .sel { background: #e8e9ed; box-shadow: inset 1px 0 #fff; }
    .side .sel::before { content: ""; position: absolute; left: 1px; top: 8px; bottom: 8px; width: 2px; background: #5b93ee; }
    .side .bottom { margin-top: auto; }
    .panel { flex: none; width: 349px; display: flex; flex-direction: column; border-right: 1px solid #b0b5bf; }
    .ptabs { height: 29px; background: #d9dce1; border-bottom: 1px solid #b0b5bf; display: flex; align-items: flex-end; padding-left: 1px; }
    .ptab { display: flex; align-items: center; height: 27px; width: 90px; margin-bottom: -1px; padding: 0 0 2px 7px; background: #f9fafc; border: 1px solid #b0b5bf; border-bottom: 0; border-radius: 3px 3px 0 0; }
    .pbar { height: 31px; display: flex; align-items: center; gap: 4px; padding: 0 3px; }
    .pbar button { width: 24px; height: 24px; background: #f0f1f4; border: 1px solid #d3d6db; border-radius: 3px; }
    .pbar .corner::after { right: 0; bottom: 0; }
    .pbar .end { margin-left: auto; }
    table { width: 100%; table-layout: fixed; border-collapse: separate; border-spacing: 0; }
    th, td { padding: 0; height: 25px; font-weight: 400; text-align: left; white-space: nowrap; position: relative; }
    th { height: 26px; background: #e0e2e8; border-top: 1px solid #b0b5bf; border-bottom: 1px solid #b0b5bf; text-align: center; }
    th + th:not(.pad) { border-left: 1px solid #b0b5bf; }
    th.name { text-align: left; padding-left: 4px; }
    th .sort { position: absolute; left: 61px; top: -6px; }
    th .in { display: flex; align-items: center; justify-content: center; }
    th.c5 .in { justify-content: flex-start; padding-left: 4px; }
    .c1 { width: 24px; } .c3 { width: 60px; } .c4 { width: 53px; } .c5 { width: 66px; } .c6 { width: 3px; }
    td { border-bottom: 1px solid #dcdee1; line-height: 24px; }
    tr.grp td { background: #c6c7c9; font-weight: 700; }
    tr.alt td { background: #e4e5e8; }
    tr td.pad { background: #f9fafc; border-bottom-color: #f9fafc; }
    td.num { text-align: right; }
    td.sel { color: #2f6fed; font-weight: 700; }
    td.leaf { padding-left: 37px; }
    td .in { display: flex; align-items: center; }
    td .in button { width: 20px; height: 20px; margin-right: 2px; }
    td input { display: block; appearance: none; width: 14px; height: 14px; margin: 0 auto; background: #fff; border: 1px solid #858b96; border-radius: 3px; }
    td input:checked { border-color: #2f6fed; background: #e9f0fd; }
    td input:checked::after { content: ""; display: block; width: 8px; height: 4px; margin: 2px auto 0; border: solid #2f6fed; border-width: 0 0 2px 2px; transform: rotate(-45deg); }

    .view { flex: 1; min-width: 0; margin-left: 2px; position: relative; background: linear-gradient(#001020, #354858); }
    .scene { position: absolute; inset: 0; width: 100%; height: 100%; display: block; }
    .scene text { font: 14px "DejaVu Sans Mono", monospace; fill: #a0a6ac; }
    .note { position: absolute; left: 8px; top: 8px; padding: 8px 13px 7px 3px; background: #191c28; border-radius: 2px; color: #f4f4f6; white-space: pre; }
    .triad { position: absolute; right: 3px; top: 8px; }
    .triad text { font: 13px "DejaVu Sans Mono", monospace; }
    .options { position: absolute; right: 0; top: 113px; width: 29px; height: 134px; flex-direction: column; justify-content: space-between; padding: 5px 0 2px 3px; background: #f9fafc; }
    .options span { writing-mode: vertical-rl; transform: rotate(180deg); }

    .dock { flex: none; height: 78px; margin-top: 1px; border-top: 1px solid #b0b5bf; display: flex; padding-top: 1px; }
    .log { flex: none; width: 92px; margin: 0 7px 0 0; overflow: hidden; border: 1px solid #b0b5bf; border-left: 0; padding: 2px 0 0 13px; white-space: nowrap; }
    .log p { margin: 0; line-height: 18px; }
    .log p:first-child { color: transparent; background: linear-gradient(#d9dbdf 20%, #7a818c 90%); background-clip: text; -webkit-background-clip: text; }
    .bars { flex: 1; min-width: 0; }
    .bar { display: grid; height: 36px; align-items: center; }
    .bar + .bar { margin-top: 4px; }
    .ba { grid-template-columns: 67px 294px 351px 1fr; }
    .bb { grid-template-columns: 281px 286px 143px 65px 191px 1fr; }
    .set { display: flex; align-items: center; gap: 2px; }
    .grip { width: 5px; height: 20px; margin: 0 2px 0 3px; background: repeating-linear-gradient(transparent 0 1px, #f9fafc 1px 3px), repeating-linear-gradient(90deg, #8d94a0 0 1px, transparent 1px 2px); }
    .tool { display: flex; height: 32px; border: 1px solid transparent; border-radius: 3px; }
    .tool .drop { width: 14px; margin-right: -1px; }
    .tool button:first-child { width: 30px; }
    .tool.dd button:first-child { width: 31px; }
    .tool.on { border-color: #5b93ee; background: #e9f0fd; }
    .tool.on .drop { border-left: 1px solid #5b93ee; margin-right: 0; width: 13px; }
    .tool .corner::after { right: 0; bottom: 2px; }
    .sep { width: 1px; height: 32px; background: #d0d3d9; margin: 0 2px; }
    .morebtn { width: 12px; height: 32px; margin-left: -2px; overflow: hidden; }
    .ent { font: 600 12px/14px Inter, sans-serif; }
    .part { font: 600 9px/12px Inter, sans-serif; }
    .deg { font: 600 9px/8px Inter, sans-serif; }
    .deg span { position: absolute; left: 3px; top: 4px; }
    .entbox { flex-direction: column; gap: 2px; font: 700 12px/12px "Liberation Mono", monospace; }
    .entbox::before { content: ""; width: 10px; height: 10px; border: 1px solid #a8902a; border-radius: 1px; background: #efe3a0; }
    .nums span { background: #e3e4e8; font: 700 9px/10px "Liberation Mono", monospace; padding: 0 2px; white-space: pre; border-radius: 2px; }

    .status { flex: none; height: 20px; padding-top: 4px; display: flex; align-items: center; background: #e8e9ed; }
    .status i { width: 1px; height: 16px; background: #d0d3d9; }
    .status i:first-child { margin: 0 8px 0 6px; }
    .status a { color: #2f6fed; text-decoration: none; }
    .status .x { width: 28px; height: 16px; }
    .status .x + a { margin-left: 2px; }
    .status .x + i { margin: 0 8px 0 3px; }
  `;

  private cmd(t: Tool, cls = t.i!) {
    return html`<div class=${classMap({ cmd: true, on: !!t.on, corner: !!t.corner, auto: cls === 'auto', ['w-' + cls]: true })}>
      <button>${ic(t.i!)}<span class="lab">${t.t}</span></button>
      ${t.drop ? html`<button class="drop" aria-label="${t.t} options">${ic('down')}</button>` : nothing}
    </div>`;
  }

  private group(n: number, title: string, body: unknown, more = false) {
    return html`<section class="group g${n}" aria-label=${title}>
      <div class="cmds">${body}</div>
      <div class="foot"><span>${title}</span>${more ? html`<button aria-label="More ${title}">${ic('down')}</button>` : nothing}</div>
    </section>`;
  }

  private tool(t: Tool | 'sep' | 'more') {
    if (t === 'sep') return html`<div class="sep"></div>`;
    if (t === 'more') return html`<button class="morebtn" aria-label="More tools">${ic('more')}</button>`;
    return html`<div class=${classMap({ tool: true, on: !!t.on, dd: !!t.drop, dim: !!t.dim })}>
      <button class="${t.cls ?? ''} ${t.corner ? 'corner' : ''}" aria-label=${t.t}>${t.text ? html`<span>${t.text}</span>` : nothing}${t.i ? ic(t.i) : nothing}</button>
      ${t.drop ? html`<button class="drop" aria-label="${t.t} options">${ic('down')}</button>` : nothing}
    </div>`;
  }

  private bar(cls: string, sets: (Tool | 'sep' | 'more')[][]) {
    return html`<div class="bar ${cls}">${sets.map(s => html`<div class="set"><span class="grip"></span>${s.map(t => this.tool(t))}</div>`)}</div>`;
  }

  private row(r: Row, k: number) {
    return html`<tr class=${classMap({ grp: !!r.group, alt: !r.group && k % 2 === 0 })}>
      <td>${r.check === undefined ? nothing : html`<input type="checkbox" aria-label="Show ${r.name}" .checked=${r.check}>`}</td>
      ${r.group
        ? html`<td colspan="4"><div class="in"><button aria-label="Collapse ${r.name}">${ic('down')}</button>${r.name}</div></td>`
        : html`<td class="leaf">${r.name}</td><td class="num">${r.num}</td><td class="num">${r.vis}</td><td class="num sel">${r.sel}</td>`}
      <td class="pad"></td></tr>`;
  }

  private scene() {
    const xs = [-470, -352.5, -235, -117.5, 117.5, 235, 352.5, 470, 587.5];
    const ys = [-352.5, -235, -117.5, 117.5, 235, 352.5];
    return html`<svg class="scene" role="img" aria-label="Sketch grid">
      <svg x="50%" y="50%" overflow="visible"><g transform="translate(2.5 .5)">
        ${xs.map(x => svg`<path d=${`M${x} -2000V-2M${x} 2V2000`} stroke="#fff" stroke-opacity=".22" stroke-width="1.6"/>`)}
        ${ys.map(y => svg`<path d=${`M-3000 ${y}H-2M2 ${y}H3000`} stroke="#fff" stroke-opacity=".22" stroke-width="1.6"/>`)}
        <path d="M0 -2000V2000" stroke="#214f38" stroke-width="2"/>
        <path d="M-3000 0H3000" stroke="#5a2632" stroke-width="2"/>
        <circle r="3.800" fill="#bdbdbd"/>
        <text x="1" y="-239">100</text><text x="1" y="-122">50</text>
        <text x="118" y="-4">50</text><text x="235" y="-4">100</text><text x="352" y="-4">150</text>
      </g></svg></svg>`;
  }

  render() {
    return html`
      <header class="title">
        <svg class="logo" viewBox="0 0 16 16" aria-hidden="true"><path d="M0 0h16v16H0z" fill="#0d5aa7"/><path d="M3 2.500h5c2.500 0 3 1 3 2.500v7M3 2.500v8h3M6 5.500v7.500h5c3 0 3-3.500.500-4M6 9h5M8 5.500h3c3 0 3 3 .500 3.500" fill="none" stroke="#fff" stroke-width="1.100"/></svg>
        <h1>ANSA v25.1.2 (C:/Users/fox/Untitled.ansa)</h1>
        <button aria-label="Minimize">${ic('wmin')}</button><button aria-label="Maximize">${ic('wmax')}</button><button aria-label="Close">${ic('wclose')}</button>
      </header>
      <div class="frame">
        <nav class="tabbar">
          <button class="file">File</button>
          <button class="scroll dim" aria-label="Scroll tabs left">${ic('left')}</button>
          <div class="tabs">
            <button>Sketch 3D</button>
            <button class="active">Sketch 2D${ic('close')}</button>
            ${tabs.map(t => html`<button>${t}</button>`)}
          </div>
          <button class="q20" aria-label="Scroll tabs right">${ic('right')}</button>
          <button class="q20 corner" aria-label="All tabs">${ic('dots')}</button>
          <button class="q undo" aria-label="Undo">${ic('undo')}</button>
          <button class="q14" aria-label="Undo history">${ic('down')}</button>
          <button class="q" aria-label="Redo">${ic('redo')}</button>
          <button class="q14 dim" aria-label="Redo history">${ic('down')}</button>
          ${quick.map(([i, t, c]) => html`<button class="q ${c ? 'corner' : ''}" aria-label=${t}>${ic(i)}</button>`)}
          <button class="q24" aria-label="More commands">${ic('right')}</button>
          <div class="field">${ic('search')}<input aria-label="Search functions" placeholder="Search Func...">
            <button class="q24" aria-label="Search settings">${ic('gear', 18)}</button><button class="q24" aria-label="Search options">${ic('down')}</button></div>
          <button class="q corner" aria-label="Nastran deck"><span class="nas">NAS</span></button>
          <button class="q corner" aria-label="Tools">${ic('tools')}</button>
          <button class="q corner" aria-label="Windows">${ic('win')}</button>
          <button class="q corner" aria-label="User">${ic('user')}</button>
          <button class="q corner" aria-label="Help">${ic('help')}</button>
        </nav>

        <div class="ribbon">
          ${this.group(1, 'DIRECT', this.cmd({ i: 'edit', t: 'Edit\nSketch' }))}
          ${this.group(2, 'DESIGN', design.map(t => this.cmd(t)), true)}
          ${this.group(3, 'EDIT', edit.map(t => this.cmd(t)), true)}
          ${this.group(4, 'CONSTRAIN', html`
            ${this.cmd({ i: 'auto', t: 'Auto\nConstrain', on: true })}
            ${this.cmd({ i: 'dimension', t: 'Dimension' })}
            <div class="mini">${constraints.map(c => html`<button aria-label=${c}>${ic(c)}</button>`)}</div>`, true)}
          ${this.group(5, 'TOOLS', this.cmd({ i: 'boolean', t: 'Boolean\nOperations', drop: true }))}
          ${this.group(6, 'UTILITIES', this.cmd({ i: 'restore', t: 'Restore\nView' }))}
          <section class="group last"><div class="cmds"></div><div class="foot"><button class="corner" aria-label="More groups">${ic('dots')}</button></div></section>
        </div>

        <div class="main">
          <nav class="side">
            ${['list', 'tree', 'parts', 'stack', 'curvebox', 'hexa'].map((i, k) => html`<button
              class=${classMap({ sel: k === this.side, corner: k === 0 })} aria-label=${i} @click=${() => (this.side = k)}>${ic(i)}</button>`)}
            <button class="bottom" aria-label="Collapse panel">${ic('dleft')}</button>
          </nav>
          <section class="panel">
            <div class="ptabs"><div class="ptab">Database<button aria-label="Close Database">${ic('close')}</button></div></div>
            <div class="pbar">
              <button aria-label="Back">${ic('back')}</button><button aria-label="Forward">${ic('fwd')}</button>
              <button class="end corner" aria-label="Panel settings">${ic('gear', 18)}</button>
            </div>
            <table>
              <thead><tr>
                <th class="c1"><div class="in">${ic('bulb', 22)}</div></th>
                <th class="name">Name<span class="sort">${ic('up')}</span></th>
                <th class="c3">Number</th><th class="c4">Visible</th>
                <th class="c5"><div class="in">Select${ic('cols')}</div></th><th class="c6 pad corner"></th>
              </tr></thead>
              <tbody>${rows.map((r, k) => this.row(r, k))}</tbody>
            </table>
          </section>
          <main class="view">
            ${this.scene()}
            <div class="note">0: Untitled,  Current Part: Untitled</div>
            <svg class="triad" width="90" height="96" viewBox="0 0 90 96" role="img" aria-label="Axes">
              <path d="M5.500 84V28" stroke="#00e800" stroke-width="2.500"/><path d="M5.500 17l5 14h-10z" fill="#00e800"/>
              <path d="M10 84h52" stroke="#c00000" stroke-width="2.500"/><path d="M71 84l-12 5V79z" fill="#c00000"/>
              <path d="M1 79h9v10H1z" fill="#003c42"/>
              <text x="2" y="14" fill="#00e800">Y</text><text x="77" y="89" fill="#d00000">X</text><text x="2" y="89" fill="#0a9a9a">Z</text>
            </svg>
            <button class="options">${ic('left')}<span>Options List</span>${ic('burger')}</button>
          </main>
        </div>

        <div class="dock">
          <div class="log"><p>Creating inde</p><p>Done.</p><p>4 Items dele</p></div>
          <div class="bars">${this.bar('ba', rowA)}${this.bar('bb', rowB)}</div>
        </div>
        <footer class="status">
          <i></i><a href="#rect">Rectangle&gt;2 Point</a><button class="x" aria-label="Cancel Rectangle">${ic('stop')}</button>
          <a href="#browser">Browser List</a><button class="x" aria-label="Close Browser List">${ic('stop')}</button>
          <i></i><span>Select Any Entity</span>
        </footer>
      </div>`;
  }
}
